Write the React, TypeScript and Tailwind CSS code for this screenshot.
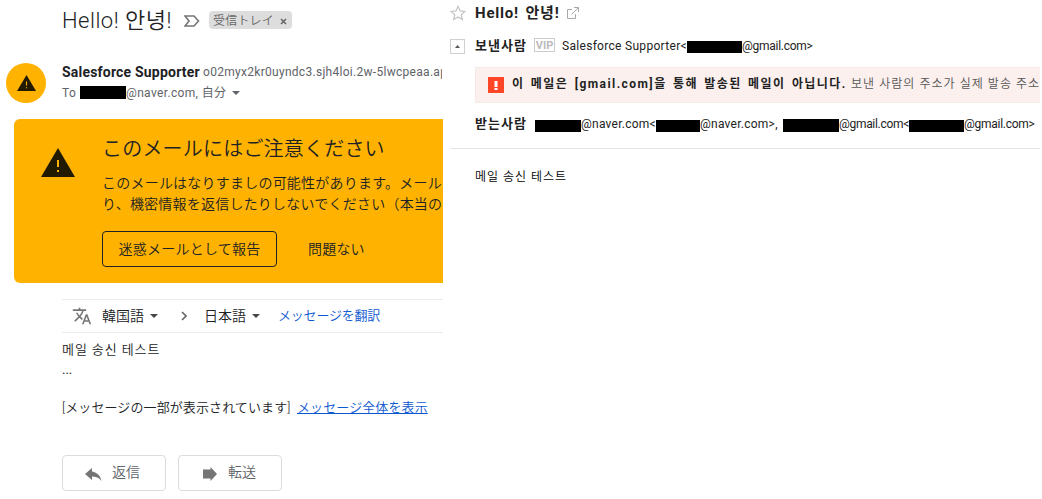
import type { ReactNode } from "react"

function Redacted({ className }: { className: string }) {
  return <span className={`shrink-0 bg-black ${className}`} />
}

function Caret({ className = "text-[#444746]" }: { className?: string }) {
  return (
    <svg width="8" height="4" viewBox="0 0 8 4" className={`shrink-0 ${className}`}>
      <path d="M0 0h8L4 4z" fill="currentColor" />
    </svg>
  )
}

function WarningTriangle({ width, height, mark }: { width: number; height: number; mark: string }) {
  return (
    <svg width={width} height={height} viewBox="0 0 34 29" preserveAspectRatio="none" className="shrink-0">
      <path d="M17 0L34 29H0z" fill="#211a00" />
      <path d="M16 12h2v7h-2zM16 22h2v2h-2z" fill={mark} />
    </svg>
  )
}

function ActionButton({ icon, label }: { icon: ReactNode; label: string }) {
  return (
    <button className="flex h-9 w-[104px] items-center rounded border border-[#dadce0] pl-[22px] text-sm text-[#5f6368]">
      <span className="flex w-[27px] shrink-0 pt-0.5">{icon}</span>
      <span className="pb-0.5 font-[350]">{label}</span>
    </button>
  )
}

function GmailPane() {
  return (
    <section className="h-[499px] w-[443px] shrink-0 overflow-hidden font-['Roboto','Noto_Sans_CJK_JP',sans-serif] whitespace-nowrap text-[#202124]">
      <header className="flex h-10 items-center pl-[62px]">
        <h1 className="w-[122px] shrink-0 pt-0.5 font-['Roboto','Noto_Sans_CJK_KR',sans-serif] text-[22px] leading-10 font-[350] tracking-[0.5px]">Hello! 안녕!</h1>
        <svg width="16" height="12" viewBox="0 0 16 12" className="mt-0.5 shrink-0">
          <path d="M1 1h9l4.500 5-4.500 5H1l4-5z" fill="none" stroke="#757575" strokeWidth="1.600" />
        </svg>
        <span className="ml-[9px] flex h-[18px] w-[83px] items-center rounded bg-[#ddd] pl-1 text-xs text-[#666]">
          <span className="w-[67px] pt-0.5 font-[350] tracking-[0.2px]">受信トレイ</span>
          <svg width="7" height="7" viewBox="0 0 7 7" className="mt-0.5">
            <path d="M1 1l5 5M6 1L1 6" stroke="#666" strokeWidth="1.600" />
          </svg>
        </span>
      </header>

      <div className="flex h-[79px] pt-[23px] pl-1.5">
        <div className="flex size-10 shrink-0 items-center justify-center rounded-full bg-[#ffb300]">
          <WarningTriangle width={19} height={16} mark="#ffb300" />
        </div>
        <div className="ml-4 text-xs text-[#5f6368]">
          <div className="flex h-[18px] items-center">
            <span className="w-[141px] shrink-0 text-sm font-bold tracking-[0.2px] text-[#202124]">Salesforce Supporter</span>
            <span className="w-[239px] shrink-0 overflow-hidden tracking-[0.29px]">o02myx2kr0uyndc3.sjh4loi.2w-5lwcpeaa.ap</span>
          </div>
          <div className="flex h-[23px] items-center tracking-[0.35px]">
            <span className="w-[18px] shrink-0">To</span>
            <Redacted className="h-[13px] w-[46px]" />
            <span className="w-[106px] shrink-0">@naver.com, 自分</span>
            <Caret className="text-[#5f6368]" />
          </div>
        </div>
      </div>

      <div className="ml-3.5 flex h-[164px] rounded-l-md bg-[#ffb300] pl-[27px]">
        <div className="pt-[29px]">
          <WarningTriangle width={34} height={29} mark="#ffb300" />
        </div>
        <div className="ml-[27px] font-[350]">
          <h2 className="mt-[15px] h-[38px] text-xl leading-[30px] tracking-[0.2px]">このメールにはご注意ください</h2>
          <p className="pt-px text-sm leading-[21px] tracking-[0.22px]">
            このメールはなりすましの可能性があります。メール
            <br />
            り、機密情報を返信したりしないでください（本当の
          </p>
          <div className="mt-4 flex h-9">
            <button className="w-[175px] rounded border border-[#202124] text-sm tracking-[0.25px]">迷惑メールとして報告</button>
            <button className="ml-[31px] text-sm tracking-[0.2px]">問題ない</button>
          </div>
        </div>
      </div>

      <div className="ml-[62px]">
        <div className="mt-4 flex h-[34px] items-center border-y border-[#ebebeb] pl-2.5 text-sm">
          <svg width="20" height="20" viewBox="0 0 24 24" className="shrink-0" fill="#757575">
            <path d="M12.87 15.07l-2.54-2.51.03-.03A17.52 17.52 0 0 0 14.07 6H17V4h-7V2H8v2H1v2h11.17C11.5 7.92 10.44 9.75 9 11.35 8.07 10.32 7.3 9.19 6.69 8h-2c.73 1.63 1.73 3.17 2.98 4.56l-5.09 5.02L4 19l5-5 3.11 3.11.76-2.04zM18.5 10h-2L12 22h2l1.12-3h4.75L21 22h2l-4.5-12zm-2.62 7l1.62-4.33L19.12 17h-3.24z" />
          </svg>
          <span className="ml-2.5 w-12 shrink-0 font-[350]">韓国語</span>
          <Caret />
          <svg width="6" height="10" viewBox="0 0 6 10" className="ml-[23px] shrink-0">
            <path d="M1 1l4 4-4 4" fill="none" stroke="#666" strokeWidth="1.600" />
          </svg>
          <span className="ml-[17px] w-12 shrink-0 font-[350]">日本語</span>
          <Caret />
          <a className="ml-[18px] text-[13px] font-[350] tracking-[-0.2px] text-[#0b57d0]">メッセージを翻訳</a>
        </div>
        <p className="h-[34px] pt-1.5 font-['Noto_Sans_CJK_KR',sans-serif] text-[13px] leading-5 font-[350] tracking-[1px]">메일 송신 테스트</p>
        <p className="h-[31px] text-[13px] leading-[6px]">...</p>
        <p className="flex h-5 items-center text-[13px] font-[350] tracking-[0.1px]">
          <span className="w-[235px] shrink-0">[メッセージの一部が表示されています]</span>
          <a className="text-[#0b57d0] underline">メッセージ全体を表示</a>
        </p>
        <div className="mt-[37px] flex gap-3">
          <ActionButton
            label="返信"
            icon={
              <svg width="17" height="13" viewBox="0 0 17 13" fill="#757575">
                <path d="M7 3.500V0L0 6l7 6V8.500c4 0 7 1 9.500 4.500C15.500 8 12.500 4.500 7 3.500z" />
              </svg>
            }
          />
          <ActionButton
            label="転送"
            icon={
              <svg width="16" height="14" viewBox="0 0 16 14" fill="#757575" className="ml-0.5">
                <path d="M0 2.500h7.500V0L14 7l-6.500 7v-2.500H0z" />
              </svg>
            }
          />
        </div>
      </div>
    </section>
  )
}

function NaverPane() {
  return (
    <section className="ml-[7px] w-[590px] shrink-0 overflow-hidden font-['Roboto','Noto_Sans_CJK_KR',sans-serif] text-xs whitespace-nowrap text-[#222]">
      <header className="flex h-[26px] items-center">
        <svg width="16" height="16" viewBox="0 0 16 16" className="shrink-0">
          <path d="M8 1.300l2 4.600 5 .5-3.800 3.300 1.100 4.900L8 12l-4.300 2.600 1.100-4.900L1 6.400l5-.5z" fill="none" stroke="#c4c4c4" strokeWidth="1.200" />
        </svg>
        <h1 className="ml-[9px] w-[92px] shrink-0 pt-px text-[15px] font-bold tracking-[0.8px] [word-spacing:2px]">Hello! 안녕!</h1>
        <svg width="12" height="12" viewBox="0 0 12 12" fill="none" stroke="#a8a8a8" className="shrink-0">
          <path d="M5 2.500H.5v9h8V7M7 .5h4.500V5M11.500.5L4.500 7.500" />
        </svg>
      </header>

      <div className="flex h-[41px] items-center">
        <span className="flex size-[15px] shrink-0 items-center justify-center border border-[#d0d0d0]">
          <svg width="5" height="3" viewBox="0 0 5 3">
            <path d="M2.500 0L5 3H0z" fill="#555" />
          </svg>
        </span>
        <strong className="ml-2.5 w-[59px] shrink-0 pb-0.5 text-[13px] tracking-[1px]">보낸사람</strong>
        <span className="mb-[3px] flex h-[14px] w-[21px] shrink-0 items-center justify-center border border-[#ccc] pt-px text-[11px] leading-3 font-bold text-[#bbb]">VIP</span>
        <span className="ml-[7px] w-[125px] shrink-0 pb-0.5 tracking-[0.3px]">Salesforce Supporter&lt;</span>
        <Redacted className="h-3 w-[55px]" />
        <span className="pb-0.5 tracking-[-0.26px]">@gmail.com&gt;</span>
      </div>

      <div className="ml-[25px] flex h-9 items-center border border-r-0 border-[#f7e9e7] bg-[#fbf0ee] pl-3">
        <span className="flex size-4 shrink-0 items-center justify-center bg-[#ff4628]">
          <svg width="4" height="9" viewBox="0 0 4 9" fill="#fff">
            <path d="M.5 0h3v6h-3zM.5 7h3v2h-3z" />
          </svg>
        </span>
        <strong className="ml-2 w-[339px] shrink-0 pb-0.5 tracking-[1.45px] [word-spacing:1.900px]">이 메일은 [gmail.com]을 통해 발송된 메일이 아닙니다.</strong>
        <span className="pb-0.5 font-[350] tracking-[1.050px] text-[#555]">보낸 사람의 주소가 실제 발송 주소</span>
      </div>

      <div className="flex h-[46px] items-center border-b border-[#e5e5e5] pl-[25px]">
        <strong className="w-[60px] shrink-0 pb-1 text-[13px] tracking-[1px]">받는사람</strong>
        <Redacted className="h-3 w-[46px]" />
        <span className="w-[75px] shrink-0 pb-1 tracking-[0.25px]">@naver.com&lt;</span>
        <Redacted className="h-3 w-11" />
        <span className="w-[83px] shrink-0 pb-1 tracking-[0.25px]">@naver.com&gt;,</span>
        <Redacted className="mb-px h-[13px] w-14" />
        <span className="w-[70px] shrink-0 pb-1 tracking-[-0.3px]">@gmail.com&lt;</span>
        <Redacted className="h-3 w-[55px]" />
        <span className="pb-1 tracking-[-0.26px]">@gmail.com&gt;</span>
      </div>

      <p className="pt-[19px] pl-[25px] leading-[18px] font-[350] tracking-[1px] text-black">메일 송신 테스트</p>
    </section>
  )
}

export default function App() {
  return (
    <main className="flex h-[499px] w-[1042px] overflow-hidden bg-white">
      <GmailPane />
      <NaverPane />
    </main>
  )
}
